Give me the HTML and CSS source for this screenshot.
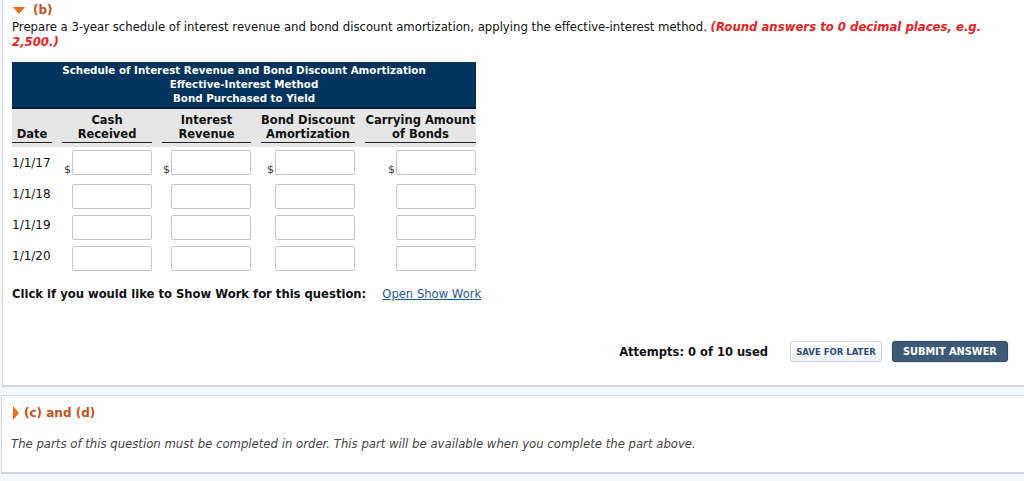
FILE: index.html
```html
<!DOCTYPE html>
<html>
<head>
<meta charset="utf-8">
<link rel="stylesheet" href="styles.css">
</head>
<body>
<div class="panel part-b">
  <div class="part-title"><span class="tri-down"></span><span class="part-label">(b)</span></div>
  <p class="prompt">Prepare a 3-year schedule of interest revenue and bond discount amortization, applying the effective-interest method. <em class="hint">(Round answers to 0 decimal places, e.g. 2,500.)</em></p>
  <table class="sched">
    <colgroup>
      <col class="c-date"><col class="c-1"><col class="c-2"><col class="c-3"><col class="c-4">
    </colgroup>
    <thead>
      <tr class="title-row"><th colspan="5">Schedule of Interest Revenue and Bond Discount Amortization<br>Effective-Interest Method<br>Bond Purchased to Yield</th></tr>
      <tr class="col-row">
        <th class="first"><span class="ul">Date</span></th>
        <th><span class="ul">Cash<br>Received</span></th>
        <th><span class="ul">Interest<br>Revenue</span></th>
        <th><span class="ul">Bond Discount<br>Amortization</span></th>
        <th class="last"><span class="ul">Carrying Amount<br>of Bonds</span></th>
      </tr>
    </thead>
    <tbody>
      <tr class="r1">
        <td class="date">1/1/17</td>
        <td><span class="cell"><span class="dollar">$</span><input type="text"></span></td>
        <td><span class="cell"><span class="dollar">$</span><input type="text"></span></td>
        <td><span class="cell"><span class="dollar">$</span><input type="text"></span></td>
        <td class="last"><span class="cell"><span class="dollar">$</span><input type="text"></span></td>
      </tr>
      <tr>
        <td class="date">1/1/18</td>
        <td><span class="cell"><input type="text"></span></td>
        <td><span class="cell"><input type="text"></span></td>
        <td><span class="cell"><input type="text"></span></td>
        <td class="last"><span class="cell"><input type="text"></span></td>
      </tr>
      <tr>
        <td class="date">1/1/19</td>
        <td><span class="cell"><input type="text"></span></td>
        <td><span class="cell"><input type="text"></span></td>
        <td><span class="cell"><input type="text"></span></td>
        <td class="last"><span class="cell"><input type="text"></span></td>
      </tr>
      <tr>
        <td class="date">1/1/20</td>
        <td><span class="cell"><input type="text"></span></td>
        <td><span class="cell"><input type="text"></span></td>
        <td><span class="cell"><input type="text"></span></td>
        <td class="last"><span class="cell"><input type="text"></span></td>
      </tr>
    </tbody>
  </table>
  <p class="showwork"><b>Click if you would like to Show Work for this question:</b><a href="#" class="link">Open Show Work</a></p>
  <div class="actions">
    <span class="attempts">Attempts: 0 of 10 used</span>
    <button class="btn-save">SAVE FOR LATER</button>
    <button class="btn-submit">SUBMIT ANSWER</button>
  </div>
</div>
<div class="panel part-c">
  <div class="part-title"><span class="tri-right"></span><span class="part-label">(c) and (d)</span></div>
  <p class="locked">The parts of this question must be completed in order. This part will be available when you complete the part above.</p>
</div>
</body>
</html>
```
FILE: styles.css
```css
html, body {
  margin: 0;
  padding: 0;
}
body {
  background: #f5f8fb;
  font-family: "DejaVu Sans", Verdana, sans-serif;
  font-size: 11px;
  color: #111;
  width: 1024px;
  height: 481px;
  overflow: hidden;
}
.panel {
  background: #fff;
  margin-left: 2px;
  border-left: 1px solid #cfd6df;
  border-bottom: 2px solid #d3d9e1;
  padding-left: 9px;
}
.part-b {
  height: 385px;
}
.part-c {
  margin-top: 8px;
  border-top: 1px solid #d3d9e1;
  margin-left: 1px;
  height: 76px;
}
.part-title {
  display: flex;
  align-items: center;
  height: 18px;
  padding-top: 1px;
}
.tri-down {
  width: 0;
  height: 0;
  border-left: 6px solid transparent;
  border-right: 6px solid transparent;
  border-top: 7px solid #f26b1d;
  margin-left: 1px;
  margin-right: 8px;
}
.part-label {
  color: #c4501c;
  font-weight: bold;
  font-size: 12px;
}
.prompt {
  margin: 1px 0 0 0;
  max-width: 985px;
  font-size: 11.7px;
  line-height: 15px;
  color: #111;
}
.hint {
  color: #ee1c1c;
  font-weight: bold;
}
.sched {
  border-collapse: collapse;
  margin-top: 12px;
  width: 464px;
  table-layout: fixed;
}
.c-date { width: 50px; }
.c-1 { width: 100px; }
.c-2 { width: 99px; }
.c-3 { width: 104px; }
.c-4 { width: 111px; }
.sched th, .sched td {
  padding: 0;
}
.title-row th {
  background: #01335f;
  color: #fff;
  font-size: 10.3px;
  line-height: 14px;
  font-weight: bold;
  padding: 1px 0 2px 0;
  border-bottom: 2px solid #0d2035;
  text-align: center;
}
.col-row th {
  background: #e6e6e6;
  font-size: 11.5px;
  line-height: 14px;
  font-weight: bold;
  vertical-align: bottom;
  padding-top: 4px;
  padding-bottom: 4px;
  padding-right: 10px;
  text-align: center;
}
.col-row th.last {
  padding-right: 0;
}
.col-row .ul {
  display: block;
  border-bottom: 1px solid #222;
  padding-bottom: 1px;
  white-space: nowrap;
}
.sched td {
  padding-right: 10px;
  padding-top: 3px;
  height: 28px;
  vertical-align: top;
}
.sched td.last {
  padding-right: 0;
}
.sched tr.r1 td {
  height: 31px;
}
.sched td.date {
  font-size: 12px;
  line-height: 14px;
  padding-top: 6px;
  height: 25px;
}
.sched tr.r1 td.date {
  padding-top: 9px;
  height: 25px;
}
.cell {
  display: flex;
  justify-content: flex-end;
  align-items: flex-end;
}
.dollar {
  font-size: 11px;
  color: #333;
  margin-right: 1px;
  line-height: 11px;
}
.cell input {
  width: 80px;
  height: 25px;
  box-sizing: border-box;
  border: 1px solid #c6c6c6;
  border-radius: 2px;
  margin: 0;
  padding: 0 3px;
  font-family: inherit;
  background: #fff;
}
.showwork {
  margin: 12px 0 0 0;
  font-size: 11.6px;
  line-height: 16px;
}
.showwork .link {
  margin-left: 16px;
  color: #1f5a93;
  font-weight: normal;
}
.actions {
  display: flex;
  align-items: center;
  justify-content: flex-end;
  margin-top: 39px;
  padding-right: 16px;
}
.attempts {
  font-weight: bold;
  font-size: 11.5px;
  margin-right: 22px;
}
.btn-save {
  font-family: inherit;
  font-size: 8.5px;
  font-weight: bold;
  color: #2e4d7c;
  background: linear-gradient(#ffffff, #eef1f5);
  border: 1px solid #cfd6df;
  border-radius: 2px;
  height: 21px;
  width: 92px;
  padding: 0;
  margin-right: 10px;
}
.btn-submit {
  font-family: inherit;
  font-size: 9.8px;
  font-weight: bold;
  color: #fff;
  background: #3d5a79;
  border: 1px solid #2f4a66;
  border-radius: 3px;
  height: 21px;
  width: 116px;
  padding: 0;
  box-shadow: 0 0 2px rgba(0,0,0,0.25);
}
.part-c .part-title {
  height: 20px;
  margin-top: 7px;
  padding-top: 0;
}
.tri-right {
  width: 0;
  height: 0;
  border-top: 7px solid transparent;
  border-bottom: 7px solid transparent;
  border-left: 6px solid #f26b1d;
  margin-left: 2px;
  margin-right: 5px;
}
.locked {
  margin: 14px 0 0 0;
  font-style: italic;
  color: #444;
  font-size: 11.7px;
  line-height: 14px;
}
```
